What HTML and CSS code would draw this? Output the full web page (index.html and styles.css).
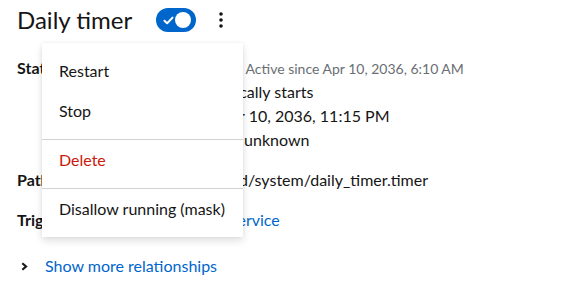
FILE: index.html
```html
<!DOCTYPE html>
<html lang="en">
<head>
    <meta charset="UTF-8">
    <title>Daily timer</title>
    <link rel="stylesheet" href="styles.css">
</head>
<body>
    <header class="unitHeader">
        <h1 class="title">Daily timer</h1>
        <span class="toggle" role="switch" aria-checked="true">
            <svg class="toggleCheck" viewBox="0 0 12 10" width="11" height="9">
                <path d="M1.5 5.2 L4.5 8 L10.5 1.8" fill="none" stroke="#fff" stroke-width="2.2" stroke-linecap="round" stroke-linejoin="round"/>
            </svg>
            <span class="toggleKnob"></span>
        </span>
        <button class="kebab" aria-label="Actions">
            <svg viewBox="0 0 4 16" width="4" height="16">
                <circle cx="2" cy="2" r="1.8" fill="#151515"/>
                <circle cx="2" cy="8" r="1.8" fill="#151515"/>
                <circle cx="2" cy="14" r="1.8" fill="#151515"/>
            </svg>
        </button>
    </header>

    <dl class="details">
        <dt>Status</dt>
        <dd>
            <div class="statusLine">
                <svg class="statusIcon" viewBox="0 0 16 16" width="16" height="16">
                    <circle cx="8" cy="8" r="7" fill="#3e8635"/>
                    <path d="M4.5 8.2 L7 10.6 L11.5 5.6" fill="none" stroke="#fff" stroke-width="1.8"/>
                </svg>
                <span class="state">Running</span>
                <span class="since">Active since Apr 10, 2036, 6:10 AM</span>
            </div>
            <div class="statusLine">
                <svg class="statusIcon" viewBox="0 0 16 16" width="16" height="16">
                    <circle cx="8" cy="8" r="6.5" fill="none" stroke="#6a6e73" stroke-width="1.5"/>
                    <path d="M8 4.5 V8 L10.5 9.5" fill="none" stroke="#6a6e73" stroke-width="1.5"/>
                </svg>
                <span>Automatically starts</span>
            </div>
            <div>Next run: Apr 10, 2036, 11:15 PM</div>
            <div><span class="runLabel">Last trigger:</span>unknown</div>
        </dd>
        <dt>Path</dt>
        <dd class="pathValue">/etc/systemd/system/daily_timer.timer</dd>
        <dt>Triggers</dt>
        <dd class="triggerValue"><a href="#">daily_timer.service</a></dd>
    </dl>

    <div class="moreRel">
        <svg class="chevron" viewBox="0 0 8 10" width="7" height="9">
            <path d="M1.5 1.2 L5.8 5 L1.5 8.8" fill="none" stroke="#151515" stroke-width="2.4"/>
        </svg>
        <a href="#">Show more relationships</a>
    </div>

    <ul class="menu">
        <li class="menuItem">Restart</li>
        <li class="menuItem">Stop</li>
        <li class="divider"></li>
        <li class="menuItem danger">Delete</li>
        <li class="divider"></li>
        <li class="menuItem">Disallow running (mask)</li>
    </ul>
</body>
</html>
```

FILE: styles.css
```css
* {
    margin: 0;
    padding: 0;
    box-sizing: border-box;
}

body {
    font-family: 'Lato', sans-serif;
    font-size: 16px;
    line-height: 1.5;
    color: #151515;
    background-color: #fff;
    padding: 0 17px;
    position: relative;
}

.unitHeader {
    display: flex;
    align-items: center;
    height: 40px;
}

.title {
    font-size: 24px;
    font-weight: 400;
    margin-right: 24px;
}

.toggle {
    display: flex;
    align-items: center;
    justify-content: space-between;
    width: 40px;
    height: 24px;
    padding: 0 5px 0 7px;
    background-color: #06c;
    border-radius: 12px;
}

.toggleKnob {
    width: 16px;
    height: 16px;
    border-radius: 50%;
    background-color: #fff;
}

.kebab {
    display: flex;
    border: none;
    background: none;
    margin-left: 23px;
    padding: 0;
}

.details {
    display: grid;
    grid-template-columns: 133px 1fr;
    row-gap: 16px;
    margin-top: 16px;
}

.details dt {
    font-weight: 700;
}

.statusLine {
    display: flex;
    align-items: center;
    gap: 8px;
}

.state {
    margin-right: 6px;
}

.since {
    font-size: 14px;
    color: #6a6e73;
}

.runLabel {
    margin-right: 11px;
}

.pathValue {
    padding-left: 5px;
}

.triggerValue {
    padding-left: 0;
}

a {
    color: #06c;
    text-decoration: none;
}

.moreRel {
    display: flex;
    align-items: center;
    margin-top: 22px;
    padding-left: 4px;
}

.chevron {
    margin-right: 17px;
}

.menu {
    position: absolute;
    top: 43px;
    left: 42px;
    width: 201px;
    list-style: none;
    padding: 8px 0;
    background-color: #fff;
    box-shadow: 0 4px 8px 0 rgba(3, 3, 3, 0.12), 0 0 4px 0 rgba(3, 3, 3, 0.06);
}

.menuItem {
    padding: 8px 17px;
}

.danger {
    color: #c9190b;
}

.divider {
    height: 1px;
    margin-top: 8px;
    background-color: #d2d2d2;
}
```
